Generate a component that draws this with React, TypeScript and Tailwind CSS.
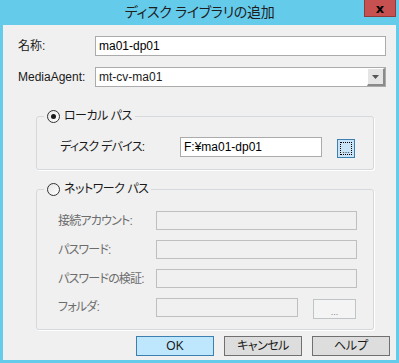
import React from "react";

const jp = "[font-family:'Liberation_Sans','Noto_Sans_CJK_JP',sans-serif] [font-feature-settings:'palt']";

function Radio({ checked }: { checked?: boolean }) {
  return (
    <span className="w-[13px] h-[13px] rounded-full border border-[#333333] bg-gradient-to-br from-[#e6e6e6] to-white flex items-center justify-center">
      {checked && <span className="w-[5px] h-[5px] rounded-full bg-[#1a1a1a]" />}
    </span>
  );
}

function Field({ w, value, disabled }: { w: string; value?: string; disabled?: boolean }) {
  return (
    <div
      className={`${w} h-[20px] border flex items-center px-[3px] text-[12px] ${
        disabled ? "border-[#bfbfbf] bg-[#f0f0f0]" : "border-[#ababab] bg-white text-black"
      }`}
    >
      {value}
    </div>
  );
}

export default function App() {
  const networkRows = ["接続アカウント:", "パスワード:", "パスワードの検証:"];

  return (
    <div className={`w-[399px] h-[363px] bg-[#65cbeb] flex flex-col ${jp}`}>
      {/* title bar */}
      <div className="h-[25px] flex items-start relative">
        <div className="flex-1 text-center text-[14px] leading-[25px] text-[#1e1e1e] tracking-[-0.3px]">
          ディスク ライブラリの追加
        </div>
        <div className="absolute right-[3px] top-0 w-[32px] h-[17px] bg-[#c75050] border border-[#8f3a3a] border-t-0 flex items-center justify-center">
          <span className="text-[13px] font-bold leading-none text-black [font-family:'DejaVu_Sans',sans-serif]">x</span>
        </div>
      </div>

      {/* body */}
      <div className="flex-1 mx-[3px] mb-[3px] bg-[#f0f0f0] flex flex-col text-[12px] text-[#1a1a1a]">
        <div className="flex items-center mt-[11px] pl-[15px]">
          <span className="w-[77px]">名称:</span>
          <Field w="w-[291px]" value="ma01-dp01" />
        </div>
        <div className="flex items-center mt-[11px] pl-[15px]">
          <span className="w-[77px]">MediaAgent:</span>
          <div className="w-[291px] h-[20px] border border-[#ababab] bg-white flex items-center">
            <span className="flex-1 px-[3px]">mt-cv-ma01</span>
            <div className="w-[18px] h-[18px] bg-[#e5e5e5] border-r-2 border-b-2 border-[#8a8a8a] border-l border-t border-l-white border-t-white flex items-center justify-center">
              <svg width="7" height="4" viewBox="0 0 7 4">
                <path d="M0 0h7L3.5 4z" fill="#555" />
              </svg>
            </div>
          </div>
        </div>

        {/* local path */}
        <fieldset className="mt-[21px] ml-[33px] w-[338px] border border-[#d5d9dd] rounded-[3px] shadow-[1px_1px_0_#ffffff] pb-[11px]">
          <legend className="ml-[7px] px-[3px] h-[16px] flex items-center gap-[4px] tracking-[-0.5px]">
            <Radio checked />
            <span>ローカル パス</span>
          </legend>
          <div className="flex items-start mt-[13px] pl-[23px]">
            <span className="w-[120px] h-[20px] leading-[20px] tracking-[-0.7px]">ディスク デバイス:</span>
            <Field w="w-[142px]" value="F:¥ma01-dp01" />
            <div className="ml-[15px] mt-[2px] w-[18px] h-[19px] border border-[#3c7fb1] bg-[#c9e3f7] p-[2px]">
              <div className="w-full h-full border border-dotted border-black flex items-end justify-center text-[9px] leading-[8px]">
                ...
              </div>
            </div>
          </div>
        </fieldset>

        {/* network path */}
        <fieldset className="mt-[11px] ml-[33px] w-[338px] border border-[#d5d9dd] rounded-[3px] shadow-[1px_1px_0_#ffffff] pb-[12px]">
          <legend className="ml-[7px] px-[3px] h-[16px] flex items-center gap-[4px] tracking-[-0.5px]">
            <Radio />
            <span>ネットワーク パス</span>
          </legend>
          <div className="flex flex-col gap-[10px] mt-[14px] pl-[21px] text-[#6d6d6d] tracking-[-0.8px]">
            {networkRows.map((label) => (
              <div key={label} className="flex items-center h-[19px]">
                <span className="w-[98px] whitespace-nowrap">{label}</span>
                <div className="w-[201px] h-[19px] border border-[#bfbfbf]" />
              </div>
            ))}
            <div className="flex items-start h-[19px]">
              <span className="w-[98px] leading-[19px]">フォルダ:</span>
              <div className="w-[142px] h-[19px] border border-[#bfbfbf]" />
              <div className="ml-[15px] mt-[1px] w-[43px] h-[20px] border border-[#bfc4c7] bg-[#f4f4f4] flex items-end justify-center text-[9px] leading-[12px] text-[#838383] tracking-normal">
                ...
              </div>
            </div>
          </div>
        </fieldset>

        {/* buttons */}
        <div className="flex justify-end gap-[10px] mt-[6px] pr-[6px]">
          <button className="w-[78px] h-[20px] border border-[#3c7fb1] bg-[#bee6fd] text-[12px] leading-none">OK</button>
          <button className="w-[78px] h-[20px] border border-[#707070] bg-[#dddddd] text-[12px] leading-none tracking-[-0.5px]">キャンセル</button>
          <button className="w-[78px] h-[20px] border border-[#707070] bg-[#dddddd] text-[12px] leading-none">ヘルプ</button>
        </div>
      </div>
    </div>
  );
}
